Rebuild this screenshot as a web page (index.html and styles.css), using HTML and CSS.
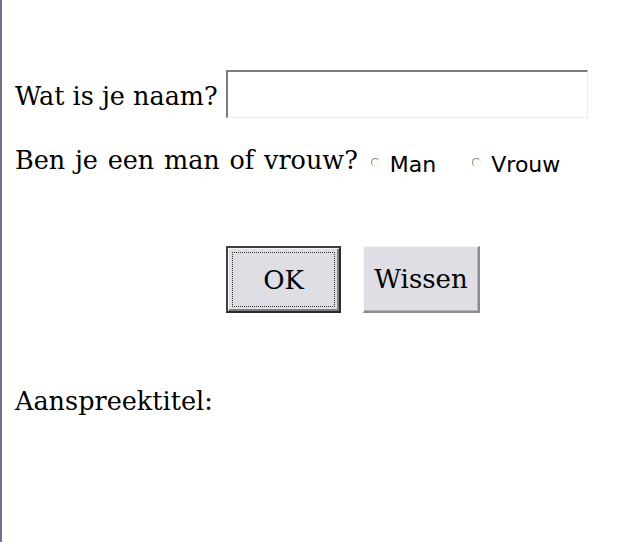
FILE: index.html
```html
<!DOCTYPE html>
<html lang="nl">
<head>
<meta charset="utf-8">
<title>Formulier</title>
<link rel="stylesheet" href="styles.css">
</head>
<body>
<div class="page">
  <form class="form">
    <div class="row name-row">
      <label class="q q-name" for="naam">Wat is je naam?</label>
      <input id="naam" class="text-in" type="text">
    </div>
    <div class="row sex-row">
      <span class="q q-wide">Ben je een man of vrouw?</span>
      <label class="opt opt-man"><input class="radio" type="radio" name="g"><span class="opt-text">Man</span></label>
      <label class="opt opt-vrouw"><input class="radio" type="radio" name="g"><span class="opt-text">Vrouw</span></label>
    </div>
    <div class="buttons">
      <button type="button" class="btn btn-default"><span class="focus-ring">OK</span></button>
      <button type="reset" class="btn">Wissen</button>
    </div>
    <div class="title">Aanspreektitel:</div>
  </form>
</div>
</body>
</html>
```
FILE: styles.css
```css
html, body {
  margin: 0;
  padding: 0;
  background: #ffffff;
}
.page {
  box-sizing: border-box;
  min-height: 542px;
  border-left: 2px solid #727290;
  padding: 70px 0 0 13px;
  font-family: "DejaVu Serif", "Liberation Serif", serif;
  font-size: 25.5px;
  color: #000;
}
.form {
  margin: 0;
}
.row {
  display: flex;
}
.name-row {
  align-items: center;
  height: 48px;
  gap: 8px;
}
.q {
  line-height: 30px;
  white-space: nowrap;
}
.q-name {
  margin-top: 4px;
}
.q-wide {
  word-spacing: 1.6px;
}
.text-in {
  box-sizing: border-box;
  width: 362px;
  height: 48px;
  margin: 0;
  padding: 0 4px;
  background: #ffffff;
  border-style: solid;
  border-width: 2px 1px 1px 2px;
  border-color: #7c7c7c #eeeedf #eeeedf #7c7c7c;
  outline: none;
  font-size: 16px;
}
.sex-row {
  margin-top: 27px;
  align-items: flex-start;
  height: 30px;
}
.opt {
  display: flex;
  align-items: center;
  margin-top: 5px;
  line-height: 30px;
  font-family: "DejaVu Sans", "Liberation Sans", sans-serif;
  font-size: 22px;
}
.opt-man {
  margin-left: 13px;
}
.opt-vrouw {
  margin-left: 36px;
}
.radio {
  appearance: none;
  -webkit-appearance: none;
  box-sizing: border-box;
  width: 9px;
  height: 9px;
  margin: 0 10px 5px 0;
  border-radius: 50%;
  border: 1px solid;
  border-color: #8a8a8a #f1f1e6 #f1f1e6 #8a8a8a;
  background: #fdfdf8;
}
.buttons {
  display: flex;
  gap: 22px;
  margin: 71px 0 0 211px;
}
.btn {
  box-sizing: border-box;
  height: 67px;
  width: 117px;
  margin: 0;
  padding: 0;
  background: #dedee4;
  font-family: "DejaVu Serif", "Liberation Serif", serif;
  font-size: 26px;
  color: #000;
  border-style: solid;
  border-width: 1px 2px 2px 1px;
  border-color: #f6f6f6 #8c8c8c #8c8c8c #f6f6f6;
  box-shadow: inset -1px -1px 0 #b4b4b8;
}
.btn-default {
  width: 115px;
  border-width: 2px;
  border-color: #404040 #2a2a2a #2a2a2a #404040;
  box-shadow: inset 1px 1px 0 #f6f6f6, inset -2px -2px 0 #808080;
  padding: 4px;
  display: flex;
}
.focus-ring {
  flex: 1;
  display: flex;
  align-items: center;
  justify-content: center;
  border: 1px dotted #303030;
}
.title {
  margin-top: 73px;
  line-height: 30px;
}
```
